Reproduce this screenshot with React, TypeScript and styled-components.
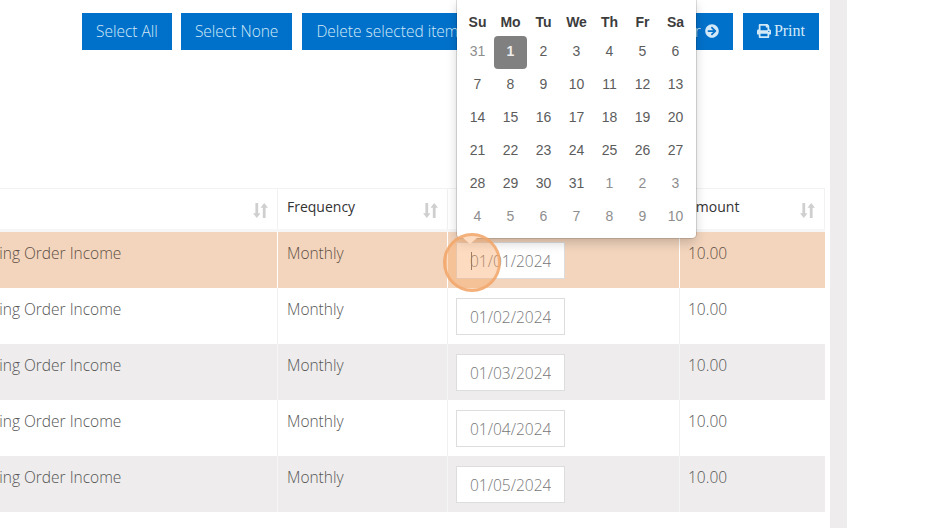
import React from "react";
import styled, { createGlobalStyle } from "styled-components";
import { FaArrowCircleRight, FaPrint } from "react-icons/fa";

const Global = createGlobalStyle`
  html, body { margin: 0; padding: 0; background: #fff; }
  body { width: 946px; height: 528px; overflow: hidden; font-family: "Open Sans", "Liberation Sans", sans-serif; }
  * { box-sizing: border-box; }
`;

const Shell = styled.div`
  display: flex;
  width: 946px;
  height: 528px;
  overflow: hidden;
  background: #fff;
`;
const Main = styled.main`
  position: relative;
  flex: 0 0 830px;
  height: 528px;
`;
const Gutter = styled.div`
  flex: 0 0 17px;
  background: #eeecec;
`;
const Toolbar = styled.div`
  display: flex;
  height: 188px;
  padding: 13px 11px 0 82px;
  align-items: flex-start;
  gap: 10px;
`;
const Btn = styled.button<{ $grow?: boolean; $serif?: boolean; $gapLeft?: number }>`
  display: inline-flex;
  align-items: center;
  justify-content: ${(p) => (p.$grow ? "flex-end" : "center")};
  flex: ${(p) => (p.$grow ? "1 1 0" : "0 0 auto")};
  height: 37px;
  padding: 0 14px 1px;
  margin-left: ${(p) => p.$gapLeft ?? 0}px;
  border: 0;
  background: #0071ca;
  color: #d4e9f8;
  font-family: ${(p) => (p.$serif ? '"Liberation Serif", serif' : '"Open Sans", sans-serif')};
  font-size: ${(p) => (p.$serif ? 16 : 15.5)}px;
  font-weight: ${(p) => (p.$serif ? 400 : 300)};
  white-space: nowrap;
  svg { flex: none; margin-right: ${(p) => (p.$serif ? 3 : 0)}px; }
`;
const TableWrap = styled.div`
  margin-left: -47px;
  width: 872px;
`;
const Row = styled.div<{ $bg?: string; $line?: string; $h: number; $text?: string }>`
  display: grid;
  grid-template-columns: 325px 170px 232px 145px;
  height: ${(p) => p.$h}px;
  background: ${(p) => p.$bg ?? "#fff"};
  color: ${(p) => p.$text ?? "#555"};
  & > div { border-right: 1px solid ${(p) => p.$line ?? "#f1f1f1"}; }
  & > div:last-child { border-right-color: transparent; }
`;
const HeadRow = styled(Row)`
  border-top: 1px solid #f2f2f2;
  border-bottom: 3px solid #f6f6f6;
  color: #333;
  & > div:last-child { border-right-color: #f1f1f1; }
`;
const HeadCell = styled.div<{ $left?: number }>`
  display: flex;
  justify-content: space-between;
  padding: 8px 8px 0 ${(p) => p.$left ?? 9}px;
  font-size: 14px;
  line-height: 20px;
`;
const Cell = styled.div<{ $left?: number }>`
  padding: 10px 9px 0 ${(p) => p.$left ?? 9}px;
  font-size: 15.5px;
  font-weight: 300;
  line-height: 22px;
`;
const DateCell = styled.div`
  position: relative;
  padding: 10px 0 0 8px;
`;
const DateInput = styled.input`
  display: block;
  width: 109px;
  height: 37px;
  padding: 0 13px;
  border: 1px solid #ddd;
  background: #fff;
  color: #777;
  font-family: "Open Sans", "Liberation Sans", sans-serif;
  font-size: 15.5px;
  font-weight: 300;
  outline: none;
`;
const Caret = styled.span`
  position: absolute;
  left: 23px;
  top: 20px;
  width: 1px;
  height: 18px;
  background: #666;
`;
const SortSvg = styled.svg`
  width: 17px;
  height: 17px;
  margin-top: 5px;
  fill: #cfcfcf;
`;
const Popup = styled.div`
  position: absolute;
  left: 457px;
  top: 0;
  width: 239px;
  height: 238px;
  padding: 8px 4px 4px;
  background: #fff;
  border-radius: 0 0 4px 4px;
  box-shadow: 0 0 0 1px rgba(0, 0, 0, 0.13), 0 5px 11px rgba(0, 0, 0, 0.18);
  font-family: "Liberation Sans", Arial, sans-serif;
  font-size: 14px;
  z-index: 3;
  &::after {
    content: "";
    position: absolute;
    left: 6px;
    top: 100%;
    border: 7px solid transparent;
    border-bottom: 0;
    border-top: 6px solid #fff;
  }
`;
const Weekdays = styled.div`
  display: grid;
  grid-template-columns: repeat(7, 33px);
  height: 28px;
`;
const Weekday = styled.div`
  text-align: center;
  font-weight: 700;
  line-height: 28px;
  color: #3c3c3c;
`;
const Days = styled.div`
  display: grid;
  grid-template-columns: repeat(7, 33px);
  grid-auto-rows: 33px;
`;
const Day = styled.div<{ $off?: boolean; $active?: boolean }>`
  display: flex;
  align-items: center;
  justify-content: center;
  padding-bottom: 3px;
  color: ${(p) => (p.$active ? "#eee" : p.$off ? "#8e8e8e" : "#5c5c5c")};
  background: ${(p) => (p.$active ? "#808080" : "transparent")};
  font-weight: ${(p) => (p.$active ? 700 : 400)};
  border-radius: 4px;
`;
const Spot = styled.div`
  position: absolute;
  left: 443px;
  top: 233px;
  width: 58px;
  height: 59px;
  border-radius: 50%;
  background: rgba(250, 160, 90, 0.38);
  border: 3px solid rgba(240, 165, 105, 0.8);
  z-index: 4;
  pointer-events: none;
`;

const Sort = () => (
  <SortSvg viewBox="0 0 16 16" aria-hidden="true">
    <path d="M3.2 1h2.6v9.6H8L4.5 15 1 10.6h2.2zM10.2 15h2.6V5.4H15L11.5 1 8 5.4h2.2z" />
  </SortSvg>
);

const head = ["Su", "Mo", "Tu", "We", "Th", "Fr", "Sa"];
type D = { n: number; off?: boolean; active?: boolean };
const days: D[] = [
  { n: 31, off: true },
  { n: 1, active: true },
  ...Array.from({ length: 30 }, (_, i) => ({ n: i + 2 })),
  ...[1, 2, 3, 4, 5, 6, 7, 8, 9, 10].map((n) => ({ n, off: true })),
];
const rows = ["01/01/2024", "01/02/2024", "01/03/2024", "01/04/2024", "01/05/2024"];

export default function App() {
  return (
    <Shell>
      <Global />
      <Main>
        <Toolbar>
          <Btn>Select All</Btn>
          <Btn $gapLeft={-1}>Select None</Btn>
          <Btn>Delete selected items</Btn>
          <Btn $grow>
            Next Year&nbsp;
            <FaArrowCircleRight size={14} />
          </Btn>
          <Btn $serif>
            <FaPrint size={14} />
            Print
          </Btn>
        </Toolbar>
        <TableWrap>
          <HeadRow $h={44}>
            <HeadCell>
              <span>Type</span>
              <Sort />
            </HeadCell>
            <HeadCell>
              <span>Frequency</span>
              <Sort />
            </HeadCell>
            <HeadCell>
              <span>Date</span>
              <Sort />
            </HeadCell>
            <HeadCell $left={7}>
              <span>Amount</span>
              <Sort />
            </HeadCell>
          </HeadRow>
          {rows.map((d, i) => {
            const first = i === 0;
            return (
              <Row
                key={d}
                $h={56}
                $bg={first ? "#f3d5bd" : i % 2 === 0 ? "#eeecec" : "#fff"}
                $line={first ? "#fff" : i % 2 === 0 ? "#f6f5f5" : "#f1f1f1"}
                $text={first ? "#5e4f45" : "#555"}
              >
                <Cell $left={6}>Standing Order Income</Cell>
                <Cell>Monthly</Cell>
                <DateCell>
                  <DateInput readOnly value={d} />
                  {first && <Caret />}
                </DateCell>
                <Cell $left={8}>10.00</Cell>
              </Row>
            );
          })}
        </TableWrap>
        <Popup>
          <Weekdays>
            {head.map((h) => (
              <Weekday key={h}>{h}</Weekday>
            ))}
          </Weekdays>
          <Days>
            {days.map((d, i) => (
              <Day key={i} $off={d.off} $active={d.active}>
                {d.n}
              </Day>
            ))}
          </Days>
        </Popup>
        <Spot />
      </Main>
      <Gutter />
    </Shell>
  );
}
